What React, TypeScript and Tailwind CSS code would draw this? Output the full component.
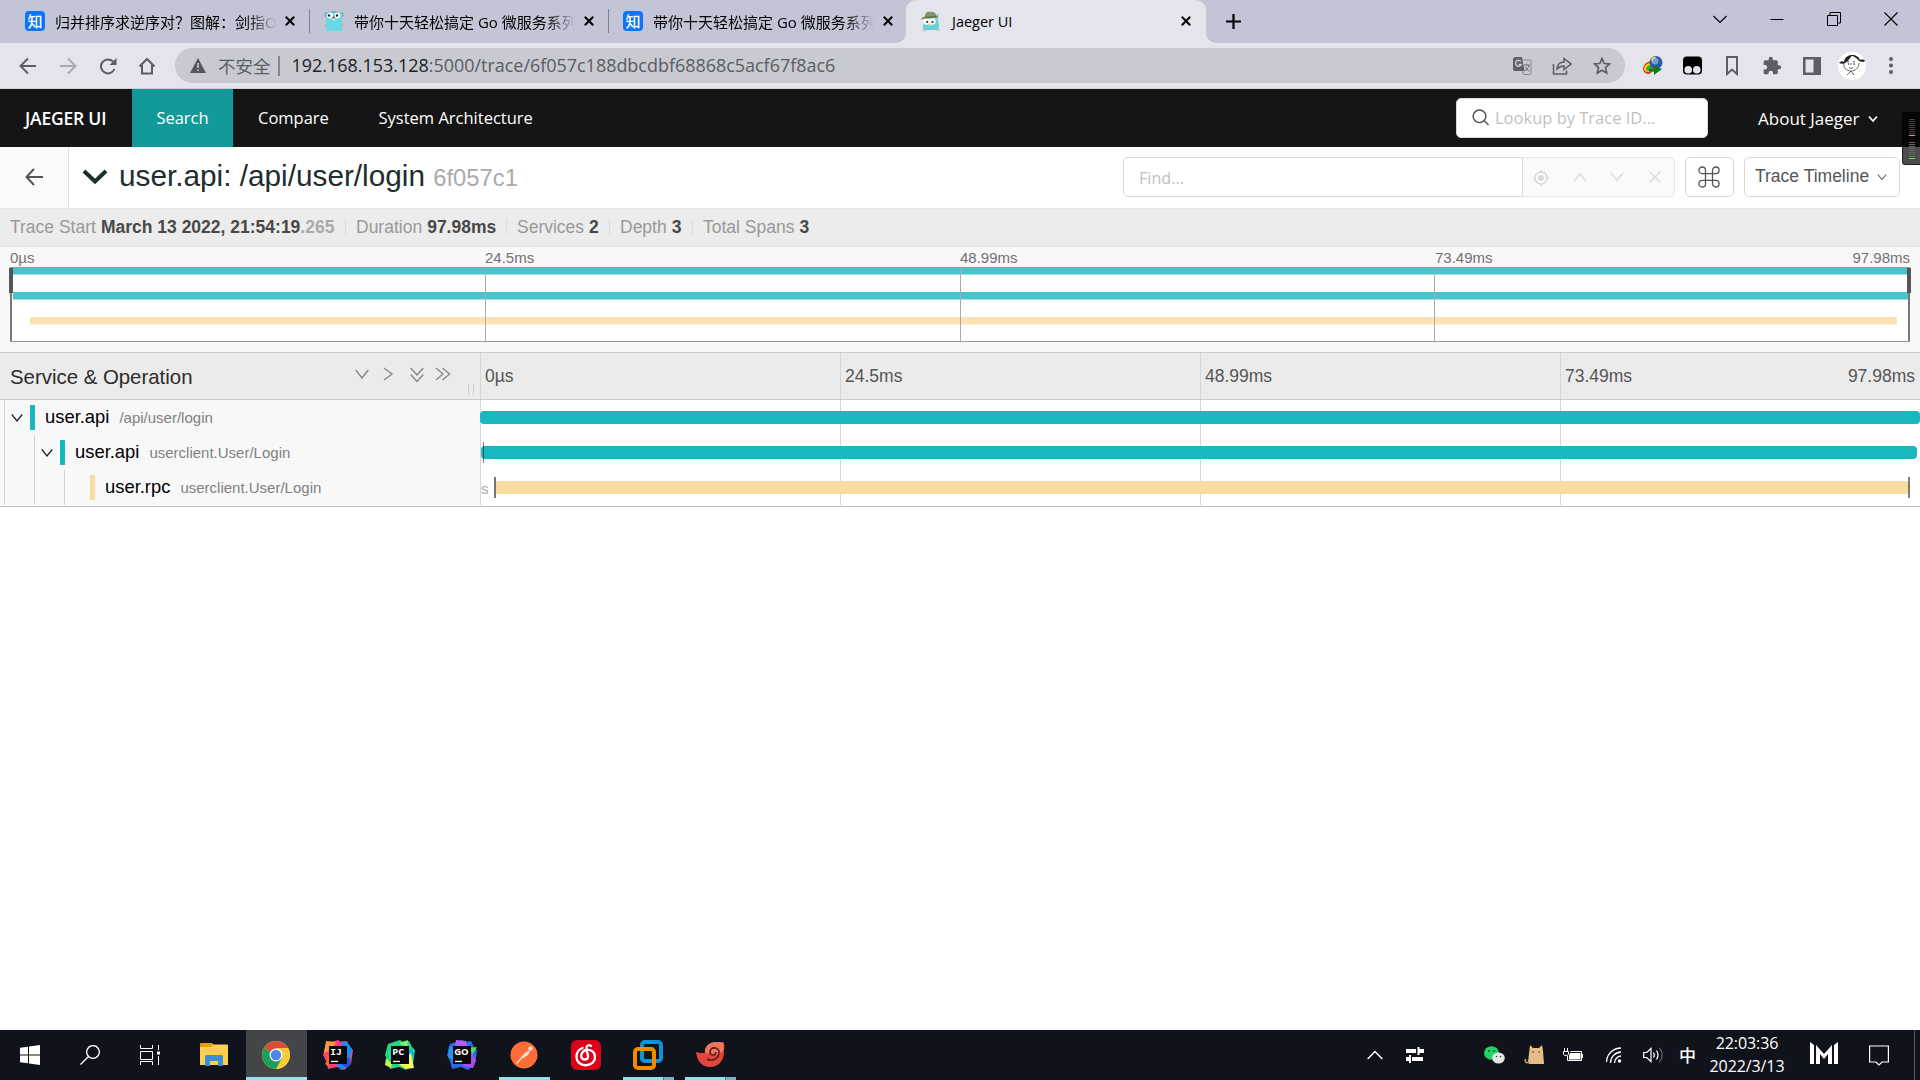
import { ReactNode } from 'react';

const TICKS = ['0µs', '24.5ms', '48.99ms', '73.49ms'];
const TOTAL = '97.98ms';

interface StrokeIconProps {
  d: string;
  w: number;
  h: number;
  stroke?: number;
  className?: string;
}

const StrokeIcon = ({ d, w, h, stroke = 1.3, className = '' }: StrokeIconProps) => (
  <svg
    width={w}
    height={h}
    viewBox={`0 0 ${w} ${h}`}
    fill="none"
    stroke="currentColor"
    strokeWidth={stroke}
    className={`shrink-0 ${className}`}
  >
    <path d={d} />
  </svg>
);

const ZhihuIcon = () => (
  <span className="flex h-5 w-5 shrink-0 items-center justify-center rounded-[4px] bg-[#0a74ff] text-[15px] leading-none font-medium text-white">
    知
  </span>
);

const GopherIcon = () => (
  <svg width="20" height="20" viewBox="0 0 20 20" className="shrink-0">
    <path d="M2 20V5c0-3 4-4.500 8-4.500S18 2 18 5v15z" fill="#6ad7e5" />
    <path d="M2 6C0 4 1 1 3 1.500M18 6c2-2 1-5-1-4.500" fill="#6ad7e5" stroke="#4b8d98" strokeWidth=".6" />
    <path d="M3 3c3-3 11-3 14 0" fill="none" stroke="#4b8d98" strokeWidth=".7" />
    <circle cx="6" cy="4.500" r="3" fill="#fff" />
    <circle cx="13.500" cy="4.500" r="3" fill="#fff" />
    <circle cx="5" cy="4.500" r="1.200" fill="#222" />
    <circle cx="13" cy="4.500" r="1.200" fill="#222" />
    <ellipse cx="9.700" cy="7.300" rx="1.800" ry="1" fill="#d9bd92" />
    <path d="M8.500 5.800h2.400v1H8.500z" fill="#333" />
    <path d="M8.800 8h1.900v1.500H8.800z" fill="#fff" />
    <path d="M0 14.500l2-1.500v3zM20 14.500L18 13v3z" fill="#c9a875" />
  </svg>
);

const JaegerIcon = () => (
  <svg width="20" height="20" viewBox="0 0 20 20" className="shrink-0">
    <path d="M2 19c0-4 0-8 2-11l12-1c2 3 2 8 2 12z" fill="#67cfdd" />
    <path d="M15 4l3-1-1 4z" fill="#67cfdd" />
    <circle cx="5.500" cy="10.500" r="3.200" fill="#fff" />
    <circle cx="11.500" cy="10.500" r="3.200" fill="#fff" />
    <circle cx="6.200" cy="11" r="1.100" fill="#222" />
    <circle cx="11.500" cy="11" r="1.100" fill="#222" />
    <ellipse cx="8.500" cy="14" rx="1.700" ry="1.100" fill="#e8cfa6" />
    <path d="M0 8.500c0-1.500 2-3 4-3C4 2 6 0 9 1c3-1 6 0 6 3.500C17 5 17.500 6 17 7 12 7 5 7 0 8.500z" fill="#84946a" />
    <path d="M4 5.500C8 6 12 5.500 15 4.500v1.200C12 7 7 7.200 4 6.700z" fill="#5d6b48" />
    <path d="M1 20l1-2 3 .5V20zM15 18.500l3-.5 1 2h-4z" fill="#d8c6a0" />
  </svg>
);

const TabClose = () => (
  <StrokeIcon w={10} h={10} stroke={2} d="M.8.8l8.400 8.400M9.200.8L.8 9.200" className="text-black" />
);

const TabTitle = ({ children }: { children: string }) => (
  <div className="ml-[10px] mr-[9px] w-[221px] overflow-hidden whitespace-nowrap pt-[2px] text-[15px] leading-5 text-black [mask-image:linear-gradient(to_right,#000_192px,transparent_222px)]">
    {children}
  </div>
);

const BrowserTab = ({ icon, title }: { icon: ReactNode; title: string }) => (
  <div className="flex h-[43px] w-[299px] items-center pb-px">
    {icon}
    <TabTitle>{title}</TabTitle>
    <TabClose />
    <div className="ml-[14px] h-6 w-px bg-[#808090]" />
  </div>
);

const TabStrip = () => (
  <div className="flex h-[43px] shrink-0 bg-[#e4e4ec]">
    <div className="flex rounded-br-[10px] bg-[#c4c4d7] pl-[25px]">
      <BrowserTab icon={<ZhihuIcon />} title="归并排序求逆序对？图解：剑指O" />
      <BrowserTab icon={<GopherIcon />} title="带你十天轻松搞定 Go 微服务系列" />
      <div className="flex h-[43px] w-[283px] items-center pb-px">
        <ZhihuIcon />
        <TabTitle>带你十天轻松搞定 Go 微服务系列</TabTitle>
        <TabClose />
      </div>
    </div>
    <div className="w-[300px] bg-[#c4c4d7]">
      <div className="flex h-full items-center rounded-t-[10px] bg-[#e4e4ec] pb-px pl-[15px]">
        <JaegerIcon />
        <span className="ml-[11px] flex-1 pt-[2px] text-[14.5px] text-black">Jaeger UI</span>
        <div className="pr-[15px]">
          <TabClose />
        </div>
      </div>
    </div>
    <div className="flex flex-1 items-center rounded-bl-[10px] bg-[#c4c4d7] pb-px pl-[20px] text-black">
      <StrokeIcon w={15} h={15} stroke={2.2} d="M7.500 0v15M0 7.500h15" />
      <div className="flex-1" />
      <div className="flex items-center pb-[5px]">
        <StrokeIcon w={14} h={14} stroke={1.1} d="M.5 4l6.500 6.500L13.500 4" className="mr-[43px]" />
        <StrokeIcon w={14} h={14} stroke={1} d="M.5 7.500h13" className="mr-[43px]" />
        <StrokeIcon w={14} h={14} stroke={1} d="M.5 3.500h10v10H.5zM3 3.500V.5h10.500V11h-3" className="mr-[43px]" />
        <StrokeIcon w={14} h={14} stroke={1.1} d="M.5.5l13 13M13.500.5l-13 13" className="mr-[22px]" />
      </div>
    </div>
  </div>
);

const AddressBar = () => (
  <div className="flex h-[46px] shrink-0 items-center border-b border-[#d0d0d8] bg-[#e4e4ec] pl-[19px] text-[#5c5e63]">
    <StrokeIcon w={17} h={18} stroke={2} d="M17 9H2M9 1.500L1.500 9 9 16.500" />
    <StrokeIcon w={17} h={18} stroke={2} d="M0 9h15M8 1.500L15.500 9 8 16.500" className="ml-6 text-[#a9a9b0]" />
    <svg width="18" height="18" viewBox="0 0 18 18" className="ml-[22px]" fill="none" stroke="currentColor" strokeWidth="2">
      <path d="M15.500 12A7 7 0 1 1 14 4.500" />
      <path d="M17.500 1v7h-7z" fill="currentColor" stroke="none" />
    </svg>
    <StrokeIcon w={18} h={18} stroke={2} d="M1.500 9.500L9 2l7.500 7.500M4 8v8.500h10V8" className="ml-[21px]" />
    <div className="ml-[19px] flex h-[35px] w-[1450px] items-center rounded-full bg-[#c9c9d1] pl-[15px] pr-[14px]">
      <svg width="16" height="15" viewBox="0 0 16 15">
        <path d="M8 0l8 15H0z" fill="#55575c" />
        <path d="M7.200 5h1.600v5H7.200zM7.200 11.500h1.600v1.600H7.200z" fill="#c9c9d1" />
      </svg>
      <span className="ml-3 w-[60px] text-[17.5px] leading-6">不安全</span>
      <div className="mr-[12px] h-5 w-[1.5px] bg-[#85858c]" />
      <span className="flex-1 pb-px text-[17.95px] leading-6 text-[#5a5c61]">
        <span className="text-[#202124]">192.168.153.128</span>:5000/trace/6f057c188dbcdbf68868c5acf67f8ac6
      </span>
      <svg width="19" height="18" viewBox="0 0 19 18">
        <path d="M2 0h7l2.500 14H2a2 2 0 0 1-2-2V2c0-1 1-2 2-2z" fill="#5f6166" />
        <path d="M10.500 3H17a1 1 0 0 1 1 1v12.500a1 1 0 0 1-1 1h-6.500l-1-3.500" fill="none" stroke="#85878c" />
        <path d="M8 4.600A3 3 0 1 0 8.300 7.500H5.500" fill="none" stroke="#c9c9d1" strokeWidth="1.400" />
        <path d="M11 8h6M14 6.500V8M16 8c-.5 3-2.500 5-4.500 6M12.500 10c1 2 2 3 4 4" fill="none" stroke="#6b6d72" />
      </svg>
      <StrokeIcon
        w={20}
        h={18}
        stroke={1.5}
        d="M1.500 7v10h13v-3.500M5 12c.5-5 3-7 7-7V1.500L19 7l-7 5.500V9C9 9 7 10 5 12z"
        className="ml-[20px]"
      />
      <StrokeIcon
        w={18}
        h={18}
        stroke={1.7}
        d="M9 1.500l2.200 5 5.300.5-4 3.600 1.200 5.400L9 13.200 4.300 16l1.200-5.400-4-3.600 5.300-.5z"
        className="ml-[21px]"
      />
    </div>
    <svg width="20" height="19" viewBox="0 0 20 19" className="ml-[18px]">
      <path d="M9 5C4 5 0 9 0 13c0 3 3 5 6 5l6-4z" fill="#e53326" />
      <path d="M8 7c-4 0-7 3-7 6 0 2 2 3 5 3l5-3z" fill="#ffd21f" />
      <path d="M8 9c-3 0-5 2-5 4 0 1 1 2 3 2l4-3z" fill="#36ab38" />
      <circle cx="13" cy="6.500" r="6.500" fill="#2b57a4" />
      <circle cx="12" cy="5" r="3.500" fill="#6f9fd0" />
      <path d="M8 4c1-3 3-4 5-3-1 2-3 2-3 5z" fill="#d3d36f" />
      <path d="M6 12.500h5V10l8 3-8 6v-3.500H6z" fill="#0d7d12" />
    </svg>
    <svg width="19" height="19" viewBox="0 0 20 19" className="ml-[20px]">
      <rect width="20" height="19" rx="4" fill="#000" />
      <circle cx="5.500" cy="14" r="4" fill="#e4e4ec" />
      <circle cx="14.500" cy="14" r="4" fill="#e4e4ec" />
    </svg>
    <StrokeIcon w={12} h={20} stroke={2} d="M1 1h10v17l-5-4.500L1 18z" className="ml-[24px]" />
    <svg width="20" height="20" viewBox="0 0 24 24" className="ml-[24px]" fill="currentColor">
      <path d="M20.500 11H19V7a2 2 0 0 0-2-2h-4V3.500a2.500 2.500 0 0 0-5 0V5H4a2 2 0 0 0-2 2v3.800h1.500a2.700 2.700 0 0 1 0 5.400H2V20a2 2 0 0 0 2 2h3.800v-1.500a2.700 2.700 0 0 1 5.400 0V22H17a2 2 0 0 0 2-2v-4h1.500a2.500 2.500 0 0 0 0-5z" />
    </svg>
    <svg width="18" height="18" viewBox="0 0 18 18" className="ml-[21px]">
      <path d="M0 0h18v18H0zM2.500 2.500v13h8v-13z" fill="currentColor" fillRule="evenodd" />
    </svg>
    <svg width="28" height="28" viewBox="0 0 28 28" className="ml-[17px]">
      <circle cx="14" cy="14" r="14" fill="#fff" />
      <path
        d="M1 11c2-2 4-2 5-1C7 5 10 3 14 3s7 2 8 5c2-1 4 0 5 0l-1 2c-3 0-5-1-5-1-2-3-6-5-7-5s-3 5-7 7c-1 1-4 1-6 0z"
        fill="#222"
      />
      <path
        d="M6 11c-1 5 3 8 7 8s8-3 8-8M9 10l2-.5M15 9.500l2 .5M13 11v2M11 15.500c1 1 3 1 4 0M13 19l-4 4M13 19l3 4"
        fill="none"
        stroke="#555"
        strokeWidth=".9"
      />
      <circle cx="10.500" cy="12" r=".8" fill="#222" />
      <circle cx="16" cy="12" r=".8" fill="#222" />
    </svg>
    <svg width="4" height="17" viewBox="0 0 4 17" className="ml-[23px]" fill="currentColor">
      <circle cx="2" cy="2" r="2" />
      <circle cx="2" cy="8.500" r="2" />
      <circle cx="2" cy="15" r="2" />
    </svg>
  </div>
);

const TopNav = () => (
  <div className="flex h-[58px] shrink-0 items-center bg-[#151515] text-[16.5px] text-white">
    <span className="w-[132px] pl-[25px] text-[17.5px] font-semibold tracking-[-0.2px]">JAEGER UI</span>
    <span className="flex h-full w-[101px] items-center justify-center bg-[#139999] pt-px">Search</span>
    <span className="w-[145px] pl-[25px] pt-px">Compare</span>
    <span className="flex-1 pt-px pl-[0.5px]">System Architecture</span>
    <div className="flex h-10 w-[252px] items-center rounded-[5px] border border-[#d9d9d9] bg-white pl-[15px] text-[#bfbfbf]">
      <StrokeIcon w={17} h={17} stroke={1.4} d="M7.500 1a6.300 6.300 0 1 0 .01 0M12 11.500l4.500 4.500" className="-mt-0.5 text-[#555]" />
      <span className="ml-[6px] pt-px">Lookup by Trace ID...</span>
    </div>
    <span className="ml-[50px] w-[110px] pt-px text-[17px]">About Jaeger</span>
    <StrokeIcon w={10} h={10} stroke={1.6} d="M1 2.500l4 4.500 4-4.500" className="mr-[42px] mt-0.5" />
  </div>
);

const TraceHeader = () => (
  <div className="flex h-[62px] shrink-0 items-center border-b border-[#e4e4e4] bg-white">
    <div className="flex h-full w-[69px] items-center justify-center border-r border-[#ddd] bg-[#fafafa] text-[#555]">
      <StrokeIcon w={19} h={18} stroke={2} d="M18 9H1.500M9 1L1.500 9 9 17" className="-mt-[2px]" />
    </div>
    <StrokeIcon w={26} h={18} stroke={4} d="M2 3l11 10.500L24 3" className="-mt-px ml-[13px] text-[#1f2d2f]" />
    <h1 className="ml-[11px] flex-1 whitespace-nowrap pb-[2px] text-[29.75px] leading-[40px] text-[#1f2d2f]">
      user.api: /api/user/login <span className="text-[23.8px] text-[#aaa]">6f057c1</span>
    </h1>
    <div className="mb-[2px] flex items-center">
      <div className="flex h-10 w-[400px] items-center rounded-l-[5px] border border-[#d9d9d9] pl-[15px] pt-[3px] font-['Open_Sans',sans-serif] text-[16.2px] text-[#bfbfbf]">
        Find...
      </div>
      <div className="flex h-10 w-[152px] items-center rounded-r-[5px] border border-l-0 border-[#e6e6e6] bg-[#fafafa] pl-[10px] text-[#d9d9d9]">
        <svg width="16" height="16" viewBox="0 0 16 16" fill="none" stroke="currentColor" strokeWidth="1.500" className="mt-0.5">
          <circle cx="8" cy="8" r="6" />
          <circle cx="8" cy="8" r="3" fill="currentColor" stroke="none" />
          <path d="M8 0v2M8 14v2M0 8h2M14 8h2" />
        </svg>
        <StrokeIcon w={14} h={14} d="M1 11l6-7.500L13 11" className="ml-[24px]" />
        <StrokeIcon w={14} h={14} d="M1 3l6 7.500L13 3" className="ml-[23px]" />
        <StrokeIcon w={12} h={12} d="M.5.5l11 11M11.500.5l-11 11" className="ml-[25px]" />
      </div>
      <div className="ml-[10px] flex h-10 w-[49px] items-center justify-center rounded-[5px] border border-[#d9d9d9] text-[#555]">
        <StrokeIcon
          w={22}
          h={22}
          stroke={1.3}
          d="M7.500 4.300v13.400a3.300 3.300 0 1 1-3.300-3.300h13.600a3.300 3.300 0 1 1-3.300 3.300V4.300a3.300 3.300 0 1 1 3.300 3.300H4.200a3.300 3.300 0 1 1 3.300-3.300z"
          className="-ml-px"
        />
      </div>
      <div className="ml-[10px] mr-5 flex h-10 w-[156px] items-center rounded-[5px] border border-[#d9d9d9] pl-[10px] text-[17.5px] text-[#555]">
        <span className="w-[122px] whitespace-nowrap">Trace Timeline</span>
        <StrokeIcon w={10} h={10} stroke={1.1} d="M.8 2.500L5 7.500l4.200-5" />
      </div>
    </div>
  </div>
);

interface SummaryItemProps {
  label: string;
  value: string;
  width: string;
  dim?: string;
  last?: boolean;
}

const SummaryItem = ({ label, value, width, dim, last }: SummaryItemProps) => (
  <div className={`flex items-center whitespace-nowrap ${width}`}>
    <span className="mr-[5px] text-[#999]">{label}</span>
    <strong className="flex-1 font-bold text-[#484848]">
      {value}
      {dim && <span className="text-[#aaa]">{dim}</span>}
    </strong>
    {!last && <span className="mr-[10px] h-4 w-px bg-[#ddd]" />}
  </div>
);

const TraceSummary = () => (
  <div className="flex h-[38px] shrink-0 items-center border-b border-[#e4e4e4] bg-[#ececec] pb-px pl-[10px] text-[17.5px]">
    <SummaryItem label="Trace Start" value="March 13 2022, 21:54:19" dim=".265" width="w-[346px]" />
    <SummaryItem label="Duration" value={TOTAL} width="w-[161px]" />
    <SummaryItem label="Services" value="2" width="w-[103px]" />
    <SummaryItem label="Depth" value="3" width="w-[83px]" />
    <SummaryItem label="Total Spans" value="3" width="w-[120px]" last />
  </div>
);

const Minimap = () => (
  <div className="h-[105px] shrink-0 bg-[#f8f8f8] px-[10px]">
    <div className="flex h-5 text-[15px] leading-[22px] text-[#717171]">
      {TICKS.map((tick, i) => (
        <span key={tick} className={i === 3 ? 'flex-1' : 'w-[475px]'}>
          {tick}
        </span>
      ))}
      <span>{TOTAL}</span>
    </div>
    <div className="relative h-[75px] w-[1900px] border border-[#999] bg-white">
      <div className="ml-[2px] mr-px h-[7px] border-b border-[#a5e1e4] bg-[#45c6cb]" />
      <div className="ml-[2px] mr-px mt-[17px] h-2 border-b border-[#a5e1e4] bg-[#45c6cb]" />
      <div className="ml-[19px] mr-[12px] mt-[17px] h-2 border-b border-[#fcf0d6] bg-[#f9e2b4]" />
      {/* tick lines run over the bars */}
      <div className="absolute inset-0 flex">
        <div className="w-[475px] border-r border-[#aaa]" />
        <div className="w-[475px] border-r border-[#aaa]" />
        <div className="w-[474px] border-r border-[#aaa]" />
      </div>
      {/* scrubber lines and their handles */}
      <div className="absolute inset-y-0 -left-px w-[2px] bg-[#777]" />
      <div className="absolute -left-[2px] top-0 h-[25px] w-[4px] bg-[#555]" />
      <div className="absolute inset-y-0 -right-px w-[2px] bg-[#777]" />
      <div className="absolute -right-[2px] top-0 h-[25px] w-[4px] bg-[#555]" />
    </div>
  </div>
);

const TimelineHeader = () => (
  <div className="flex h-12 shrink-0 border-y border-[#ccc] bg-[#ebebeb] text-[17.5px] leading-[46px] text-[#555]">
    <div className="flex w-[480px] items-center pl-[10px] text-[#888]">
      <span className="w-[345px] pt-px text-[20.4px] leading-[46px] text-[#2b2b2b]">Service &amp; Operation</span>
      <StrokeIcon w={14} h={14} stroke={1.4} d="M.7 3L7 11l6.300-8" className="mb-1" />
      <StrokeIcon w={14} h={14} stroke={1.4} d="M3 1l8 6-8 6" className="mb-1 ml-[12px]" />
      <StrokeIcon w={14} h={16} stroke={1.4} d="M.7 1L7 8l6.300-7M.7 7.500L7 14.500l6.300-7" className="mb-0.5 ml-[15px]" />
      <StrokeIcon w={16} h={14} stroke={1.4} d="M1 1l7 6-7 6M7.500 1l7 6-7 6" className="mb-1 ml-[11px]" />
      <div className="ml-[17px] mt-[27px] h-[11px] w-[6px] border-x border-[#ccc]" />
    </div>
    {TICKS.map((tick, i) => (
      <div key={tick} className="flex w-[360px] border-l border-[#d5d5d5] pl-[4px] pr-[5px]">
        <span className="flex-1">{tick}</span>
        {i === 3 && <span>{TOTAL}</span>}
      </div>
    ))}
  </div>
);

interface Span {
  service: string;
  operation: string;
  depth: number;
  color: string;
  start: number;
  width: number;
}

const SPANS: Span[] = [
  { service: 'user.api', operation: '/api/user/login', depth: 0, color: '#17b8be', start: 0, width: 1440 },
  { service: 'user.api', operation: 'userclient.User/Login', depth: 1, color: '#17b8be', start: 1, width: 1436 },
  { service: 'user.rpc', operation: 'userclient.User/Login', depth: 2, color: '#f8dca1', start: 15, width: 1414 },
];

const SpanRow = ({ span }: { span: Span }) => (
  <div className="flex h-[35px]">
    <div className="flex w-[480px] items-center bg-[#f8f8f8] pl-1">
      {Array.from({ length: span.depth + 1 }, (_, i) => (
        <div key={i} className="flex h-full w-[26px] items-center border-l border-[#d0d0d0] pl-[5.5px] not-first:ml-1">
          {i === span.depth && span.depth < 2 && (
            <StrokeIcon w={12} h={12} stroke={1.3} d="M.8 2.500L6 9l5.200-6.500" className="text-[#222]" />
          )}
        </div>
      ))}
      <div className="h-[25px] w-[5px]" style={{ backgroundColor: span.color }} />
      <span className="ml-[10px] pb-[2px] text-[18.4px] text-black">{span.service}</span>
      <span className="ml-[10px] pt-[1px] text-[15px] text-[#808080]">{span.operation}</span>
    </div>
    <div className="relative flex w-[1440px] items-center">
      {TICKS.map(tick => (
        <div key={tick} className="h-full w-[360px] border-l border-[#d5d5d5]" />
      ))}
      <div
        className="absolute h-[13px] rounded-[4px]"
        style={{ backgroundColor: span.color, left: span.start, width: span.width }}
      />
      {span.depth === 1 && <div className="absolute left-[3px] h-[21px] w-px bg-black/50" />}
      {span.depth === 2 && (
        <>
          <span className="absolute left-px top-[9px] text-[15px] leading-5 text-[#aaa]">s</span>
          <div className="absolute left-[14px] h-[21px] w-[2px] bg-[#777]" />
          <div className="absolute left-[1428px] h-[21px] w-[2px] bg-black/50" />
        </>
      )}
    </div>
  </div>
);

const TaskButton = ({ children, underline = false }: { children: ReactNode; underline?: boolean }) => (
  <div className="flex h-full w-[62px] flex-col items-center">
    <div className="flex h-[47px] items-center pt-[3px]">{children}</div>
    {underline && <div className="h-[3px] w-[51px] bg-[#8ae5f2]" />}
  </div>
);

const GroupedButton = ({ children }: { children: ReactNode }) => (
  <div className="flex h-full w-[62px] flex-col items-center">
    <div className="flex h-[47px] items-center pt-[3px]">{children}</div>
    <div className="flex h-[3px] w-[51px] bg-[#8ae5f2]">
      <div className="ml-auto w-[11px] border-l border-[#4a7d88] bg-[#75b6c1]" />
    </div>
  </div>
);

interface IdeIconProps {
  label: string;
  base: string;
  shapes: [string, string][];
}

const IdeIcon = ({ label, base, shapes }: IdeIconProps) => (
  <svg width="30" height="30" viewBox="0 0 30 30">
    <path d="M3 4l12-4 3 2 6-1 3 6 3 3-2 14-7 6-7-3-9 2-2-8-3-6z" fill={base} />
    {shapes.map(([d, fill]) => (
      <path key={d} d={d} fill={fill} />
    ))}
    <rect x="6" y="6" width="18" height="18" fill="#080808" />
    <text
      x="7.200"
      y="15"
      fill="#fff"
      fontSize="9.500"
      fontWeight="700"
      fontFamily={label === 'IJ' ? 'Liberation Mono' : 'Open Sans'}
    >
      {label}
    </text>
    <path d="M8 20.800h7v1.300H8z" fill="#fff" />
  </svg>
);

const Taskbar = () => (
  <div className="mt-auto flex h-[50px] shrink-0 items-center bg-[#10131b] text-white">
    <div className="flex w-[60px] justify-center">
      <svg width="20" height="20" viewBox="0 0 20 20" fill="#fff">
        <path d="M0 2.800l8-1.100v7.800H0zM9 1.500L20 0v9.500H9zM0 10.500h8v7.800l-8-1.100zM9 10.500h11V20L9 18.500z" />
      </svg>
    </div>
    <div className="flex w-[60px] justify-center">
      <StrokeIcon w={20} h={20} stroke={1.3} d="M13 .7a6.300 6.300 0 1 0 .01 0M8.500 11.500L.5 19.500" />
    </div>
    <div className="flex w-[60px] justify-center">
      <svg width="20" height="20" viewBox="0 0 20 20" fill="none" stroke="#fff">
        <path d="M.5 0v3.500h12V0M.5 6.500h12v8H.5zM.5 20v-3.500h12V20M18.500 0v5M18.500 11v9" />
        <path d="M17 6.500h3v3h-3z" fill="#fff" stroke="none" />
      </svg>
    </div>
    <div className="flex w-[66px] justify-center pl-[2px]">
      <svg width="28" height="24" viewBox="0 0 28 24">
        <path d="M0 1a1 1 0 0 1 1-1h11l2 2-2 2H0z" fill="#e59e05" />
        <path d="M13 1.500h14a1 1 0 0 1 1 1V22H0V4h11z" fill="#ffcf52" />
        <path d="M5 23V13.500a1.500 1.500 0 0 1 1.500-1.500h15a1.500 1.500 0 0 1 1.500 1.500V23h-5v-5h-8v5z" fill="#3a8fd6" />
      </svg>
    </div>
    <div className="flex h-full w-[61px] flex-col items-center bg-[#434549]">
      <div className="flex h-[47px] items-center pr-px pt-[2px]">
        <svg width="28" height="28" viewBox="0 0 28 28">
          <circle cx="14" cy="14" r="14" fill="#f9cb3c" />
          <path d="M14 14L1.900 7A14 14 0 0 1 26.100 7z" fill="#da4b3e" />
          <path d="M14 14L1.900 7a14 14 0 0 0 12.100 21l6-10.500z" fill="#1c9f5a" />
          <path d="M14 7h12.100A14 14 0 0 1 14 28l6-10.500z" fill="#f9cb3c" />
          <circle cx="14" cy="14" r="6.500" fill="#fff" />
          <circle cx="14" cy="14" r="5.200" fill="#4a86ee" />
        </svg>
      </div>
      <div className="h-[3px] w-full bg-[#8ae5f2]" />
    </div>
    <TaskButton>
      <IdeIcon
        label="IJ"
        base="#fc3f7c"
        shapes={[
          ['M3 1l10 1-4 8-8 3z', '#fc9a38'],
          ['M18 1l6 1 5 7-3 17-8 4-4-5 6-17z', '#1a8cf5'],
          ['M1 12l6 5-1 10-4-3 3-5z', '#f7662d'],
          ['M18 24l6 4 4-5-2-6z', '#2450e8'],
        ]}
      />
    </TaskButton>
    <TaskButton>
      <IdeIcon
        label="PC"
        base="#22d789"
        shapes={[
          ['M14 3l9-3-1 8z', '#7af071'],
          ['M23 8l6 4-2 10-5-4z', '#08b4ea'],
          ['M12 23l14-10 3 15-8 1z', '#f4f65a'],
          ['M1 18l6 6-1 4-6-3z', '#c5f552'],
        ]}
      />
    </TaskButton>
    <TaskButton>
      <IdeIcon
        label="GO"
        base="#236fe8"
        shapes={[
          ['M9 0l10 1 2 7H8z', '#b45cf5'],
          ['M23 8l7-1-5 8z', '#57e04d'],
          ['M24 11l5 9-3 8-11-2z', '#a64cf0'],
          ['M2 6l6 2-2 12-5-3z', '#2d8fe5'],
        ]}
      />
    </TaskButton>
    <TaskButton underline>
      <svg width="28" height="28" viewBox="0 0 28 28">
        <circle cx="14" cy="14" r="13.500" fill="#ff6c37" />
        <path d="M11 16l5-5 4-1.500-1.500 4-5 3.500z" fill="#fde3d8" />
        <circle cx="20.500" cy="7.500" r="2.200" fill="#fde3d8" />
        <path d="M6.500 22.500l6-6.500" stroke="#fde3d8" strokeWidth="1.400" />
      </svg>
    </TaskButton>
    <TaskButton>
      <svg width="30" height="30" viewBox="0 0 30 30">
        <rect width="30" height="30" rx="6" fill="#dd001b" />
        <path
          d="M11.500 8C4 11 4 20 9 23.500c6 4 15 .5 15-6.500 0-5-4-7.500-8-7-5 .5-6.500 5-5.500 7.500s6 3 6.500-.5c.3-2-2-7-1.500-9.500.3-2.500 3-3 4.500-1.500"
          fill="none"
          stroke="#fff"
          strokeWidth="2.300"
          strokeLinecap="round"
        />
      </svg>
    </TaskButton>
    <GroupedButton>
      <svg width="30" height="30" viewBox="0 0 30 30" fill="none" strokeWidth="4">
        <rect x="9" y="2" width="19" height="19" rx="3" stroke="#0a94d6" />
        <rect x="2" y="9" width="19" height="19" rx="3" stroke="#f38b00" />
        <path d="M9 11v7a3 3 0 0 0 3 3h7" stroke="#0a94d6" />
      </svg>
    </GroupedButton>
    <GroupedButton>
      <svg width="30" height="26" viewBox="0 0 30 26">
        <path d="M1 10c3 1 6 1 9 1-1-6 4-10 9-10 5 0 10 2 10 1 1 1 0 5 0 8 0 9-6 15-14 15C7 25 2 19 1 10z" fill="#e2453a" />
        <path d="M10 11c-1-6 4-11 10-11 5 0 9 0 9 1-1 2 0 6-1 8l-6 4z" fill="#ee7661" />
        <path d="M12 17c5 3 12 0 12-7 0-5-9-6-9 0 0 4 6 4 6 0" fill="none" stroke="#5c1c1c" strokeWidth="1.600" />
      </svg>
    </GroupedButton>

    <div className="ml-auto flex h-full items-center">
      <StrokeIcon w={16} h={10} stroke={1.5} d="M.7 9L8 1.500 15.300 9" />
      <svg width="18" height="16" viewBox="0 0 18 16" fill="#fff" className="ml-[23px]">
        <path d="M0 2h10v4H0zM11.500 0h2v2H18v4h-4.500v2h-2zM6 10h11v4H6zM0 10h3V8h2v8H3v-2H0z" />
      </svg>
      <svg width="21" height="18" viewBox="0 0 21 18" className="ml-[60px]">
        <ellipse cx="7.500" cy="7" rx="7.500" ry="6.800" fill="#1fd366" />
        <ellipse cx="14.500" cy="12" rx="6.300" ry="5.500" fill="#e6e6e6" />
        <g fill="#10532c">
          <circle cx="5" cy="5" r="1" />
          <circle cx="10" cy="5" r="1" />
          <circle cx="12.500" cy="10.500" r=".8" />
          <circle cx="16.500" cy="10.500" r=".8" />
        </g>
      </svg>
      <svg width="21" height="20" viewBox="0 0 21 20" className="ml-[19px]">
        <path d="M6 0l3 3h6l3-3 1 6 1 13H5l-1-2z" fill="#e6bd86" />
        <path d="M6 17c-4 2-6-1-4-3" fill="none" stroke="#c79559" strokeWidth="1.700" />
        <circle cx="9" cy="7" r=".8" fill="#4b3117" />
        <circle cx="15" cy="7" r=".8" fill="#4b3117" />
      </svg>
      <svg width="21" height="15" viewBox="0 0 21 15" fill="none" stroke="#fff" className="ml-[18px]">
        <path d="M7.500 3.500h11v9H4.500V8M19.500 6v4M1.500 0v3M4.500 0v3M.5 3.500h5V6c0 2-5 2-5 0z" />
        <path d="M7 5h10.500v6.500H6V8z" fill="#fff" stroke="none" />
      </svg>
      <svg width="16" height="16" viewBox="0 0 16 16" fill="none" stroke="#fff" className="ml-[22px]">
        <path d="M.5 15A14.500 14.500 0 0 1 15 1M4.500 16A11 11 0 0 1 15 5M8.500 16A7 7 0 0 1 15 9" strokeWidth="1.300" />
        <circle cx="13.500" cy="14" r="1.700" fill="#fff" stroke="none" />
      </svg>
      <svg width="21" height="16" viewBox="0 0 21 16" fill="none" stroke="#fff" strokeWidth="1.200" className="ml-[21px]">
        <path d="M.7 5.500h3L8 1.500v13l-4.300-4h-3zM10.500 5.500c1 1.500 1 3.500 0 5M13.500 3.500c2 3 2 6 0 9" />
        <path d="M16.500 1c3.500 4 3.500 10 0 14" stroke="#666" />
      </svg>
      <span className="ml-[15px] w-[17px] text-[17px] leading-none font-medium">中</span>
      <div className="ml-[10px] w-[82px] text-center text-[16px] leading-[23px] tracking-[-0.1px]">
        <div>22:03:36</div>
        <div>2022/3/13</div>
      </div>
      <svg width="28" height="22" viewBox="0 0 28 22" fill="#fff" className="-mt-1 ml-[22px]">
        <path d="M0 0l4 3v19H0zM28 0l-4 3v19h4zM6 3l8 9 8-9v19h-4v-10l-4 5-4-5v10H6z" />
      </svg>
      <StrokeIcon w={20} h={21} stroke={1.2} d="M.6 1h18.800v16H13l-3 3-3-3H.6z" className="ml-[31px]" />
      <div className="ml-[25px] mr-[5px] h-full w-px bg-[#51545a]" />
    </div>
  </div>
);

// Small volume meter that floats over the right edge of the window
const MeterOverlay = () => (
  <div className="absolute right-0 top-[112px] flex h-[53px] w-[18px] flex-col items-center rounded-l-[3px] border border-r-0 border-black/60 bg-black/70 pt-[6px]">
    <div className="h-[16px] w-[6px] bg-[repeating-linear-gradient(#444_0_1px,transparent_1px_2px)]" />
    <div className="h-px w-[6px] bg-[#f5a623]" />
    <div className="mt-[6px] h-[16px] w-[6px] bg-[repeating-linear-gradient(#666_0_1px,transparent_1px_2px)]" />
    <div className="h-px w-[6px] bg-[#6be21e]" />
  </div>
);

const App = () => (
  <div className="relative flex h-[1080px] w-[1920px] flex-col overflow-hidden bg-white font-['Open_Sans','Noto_Sans_CJK_SC',sans-serif]">
    <TabStrip />
    <AddressBar />
    <TopNav />
    <div className="flex flex-col font-['Liberation_Sans',Arial,sans-serif]">
      <TraceHeader />
      <TraceSummary />
      <Minimap />
      <TimelineHeader />
      <div className="border-b border-[#bbb] pb-px">
        {SPANS.map(span => (
          <SpanRow key={span.depth} span={span} />
        ))}
      </div>
    </div>
    <Taskbar />
    <MeterOverlay />
  </div>
);

export default App;
